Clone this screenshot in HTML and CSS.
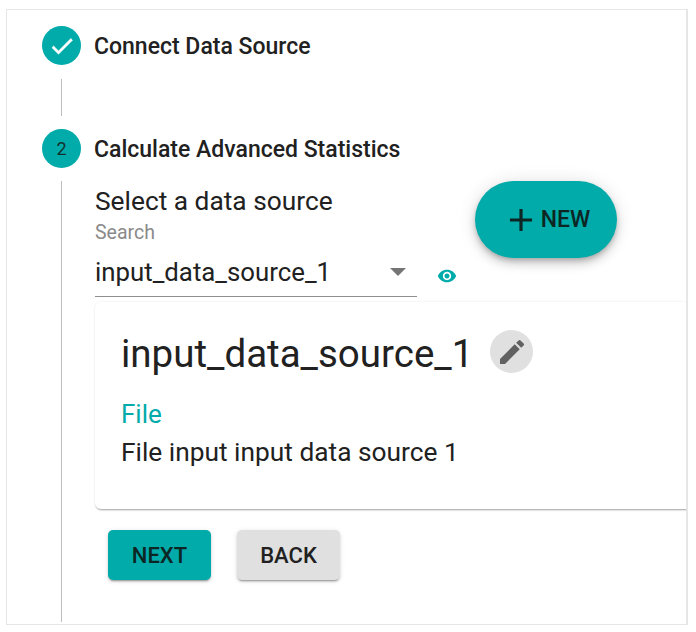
FILE: index.html
```html
<!DOCTYPE html>
<html lang="en">
<head>
    <meta charset="UTF-8">
    <meta name="viewport" content="width=device-width, initial-scale=1.0">
    <title>Stepper</title>
    <link rel="stylesheet" href="styles.css">
</head>
<body>
    <div class="frame">
        <div class="step-head">
            <div class="step-icon">
                <svg width="28" height="28" viewBox="0 0 24 24"><path d="M9 16.2 4.8 12l-1.400 1.400L9 19 21 7l-1.400-1.400z" fill="#fff" stroke="#fff" stroke-width="0.5"/></svg>
            </div>
            <span class="step-title">Connect Data Source</span>
        </div>
        <div class="step-connector"></div>

        <div class="step-head">
            <div class="step-icon">2</div>
            <span class="step-title">Calculate Advanced Statistics</span>
        </div>
        <div class="step-content">
            <div class="select-heading">Select a data source</div>
            <button class="fab">
                <svg width="38" height="38" viewBox="0 0 24 24"><path d="M19 13h-6v6h-2v-6H5v-2h6V5h2v6h6z" fill="#0d2624"/></svg>
                <span>NEW</span>
            </button>
            <div class="select-row">
                <div class="select-field">
                    <label class="select-label">Search</label>
                    <div class="select-value">
                        <span>input_data_source_1</span>
                        <i class="select-arrow"></i>
                    </div>
                </div>
                <svg class="eye" width="20" height="20" viewBox="0 0 24 24"><path d="M12 4.500C7 4.500 2.700 7.600 1 12c1.700 4.400 6 7.500 11 7.500s9.300-3.100 11-7.500c-1.700-4.400-6-7.500-11-7.500zM12 17c-2.800 0-5-2.200-5-5s2.200-5 5-5 5 2.200 5 5-2.200 5-5 5zm0-8c-1.700 0-3 1.300-3 3s1.300 3 3 3 3-1.300 3-3-1.300-3-3-3z" fill="#00abaa"/></svg>
            </div>
            <div class="card">
                <div class="card-head">
                    <h2 class="card-title">input_data_source_1</h2>
                    <button class="edit-btn">
                        <svg width="32" height="32" viewBox="0 0 24 24"><path d="M3 17.250V21h3.750L17.810 9.940l-3.750-3.750L3 17.250zM20.710 7.040a1 1 0 0 0 0-1.410l-2.340-2.340a1 1 0 0 0-1.410 0l-1.830 1.830 3.750 3.750 1.830-1.830z" fill="#616161"/></svg>
                    </button>
                </div>
                <div class="card-type">File</div>
                <div class="card-desc">File input input data source 1</div>
            </div>
            <div class="actions">
                <button class="btn btn-primary">NEXT</button>
                <button class="btn btn-default">BACK</button>
            </div>
        </div>
    </div>
</body>
</html>
```

FILE: styles.css
```css
body {
    margin: 0;
    background-color: #fff;
    font-family: Roboto, "Liberation Sans", sans-serif;
    color: #212121;
}

.frame {
    box-sizing: border-box;
    width: 682px;
    height: 616px;
    margin: 9px 0 0 6px;
    padding: 16px 0 0 35px;
    border: 1px solid #e6e6e6;
    border-right-width: 2px;
    overflow: hidden;
}

.step-head {
    display: flex;
    align-items: center;
    gap: 13px;
}
.step-icon {
    width: 39px;
    height: 39px;
    border-radius: 50%;
    background-color: #00abaa;
    display: flex;
    justify-content: center;
    align-items: center;
    font-size: 18px;
    color: #12302e;
}
.step-title {
    font-size: 23px;
    font-weight: 500;
    position: relative;
    top: 1px;
}
.step-connector {
    width: 1px;
    height: 37px;
    margin: 14px 0 13px 19px;
    background-color: #bdbdbd;
}

.step-content {
    position: relative;
    margin: 13px 0 0 19px;
    padding: 3px 0 0 33px;
    height: 441px;
    box-sizing: border-box;
    border-left: 1px solid #bdbdbd;
}
.select-heading {
    font-size: 26.300px;
    line-height: 34px;
}

.fab {
    position: absolute;
    left: 413px;
    top: 0;
    width: 142px;
    height: 77px;
    border: none;
    border-radius: 39px;
    background-color: #00abaa;
    color: #0d2624;
    font-family: inherit;
    font-size: 23px;
    font-weight: 500;
    display: flex;
    justify-content: center;
    align-items: center;
    gap: 1px;
    padding: 0;
    box-shadow: 0 3px 5px -1px rgba(0,0,0,0.2), 0 6px 10px 0 rgba(0,0,0,0.14), 0 1px 18px 0 rgba(0,0,0,0.12);
}

.select-row {
    display: flex;
    align-items: flex-end;
    gap: 20px;
}
.select-field {
    width: 322px;
    border-bottom: 1px solid #8f8f8f;
}
.select-label {
    display: block;
    margin-top: 3px;
    font-size: 19.500px;
    line-height: 24px;
    color: #8a8a8a;
}
.select-value {
    display: flex;
    justify-content: space-between;
    align-items: center;
    font-size: 25.800px;
    line-height: 30px;
    padding: 12px 11px 9px 0;
}
.select-arrow {
    width: 0;
    height: 0;
    border-left: 8.500px solid transparent;
    border-right: 8.500px solid transparent;
    border-top: 8px solid #757575;
}
.eye {
    margin-bottom: 11px;
}

.card {
    box-sizing: border-box;
    width: 620px;
    height: 207px;
    margin-top: 5px;
    padding: 28px 26px 0;
    border-radius: 6px;
    background-color: #fff;
    box-shadow: 0 2px 2px -1px rgba(0,0,0,0.35), 0 0 3px rgba(0,0,0,0.08);
}
.card-head {
    display: flex;
    align-items: flex-start;
    gap: 17px;
}
.card-title {
    margin: 0;
    font-size: 38.500px;
    font-weight: 400;
    line-height: 48px;
}
.edit-btn {
    width: 43px;
    height: 43px;
    border: none;
    border-radius: 50%;
    padding: 0;
    background-color: #e0e0e0;
    display: flex;
    justify-content: center;
    align-items: center;
}
.card-type {
    margin-top: 21px;
    font-size: 26px;
    line-height: 30px;
    color: #00abaa;
}
.card-desc {
    margin-top: 8px;
    font-size: 26.300px;
    line-height: 30px;
}

.actions {
    display: flex;
    gap: 26px;
    margin: 21px 0 0 13px;
}
.btn {
    width: 103px;
    height: 50px;
    border: none;
    border-radius: 5px;
    padding: 1px 0 0;
    font-family: inherit;
    font-size: 22px;
    font-weight: 500;
    box-shadow: 0 3px 1px -2px rgba(0,0,0,0.2), 0 2px 2px 0 rgba(0,0,0,0.14), 0 1px 5px 0 rgba(0,0,0,0.12);
}
.btn-primary {
    background-color: #00abaa;
    color: #0d2624;
}
.btn-default {
    background-color: #e0e0e0;
    color: #212121;
}
```
